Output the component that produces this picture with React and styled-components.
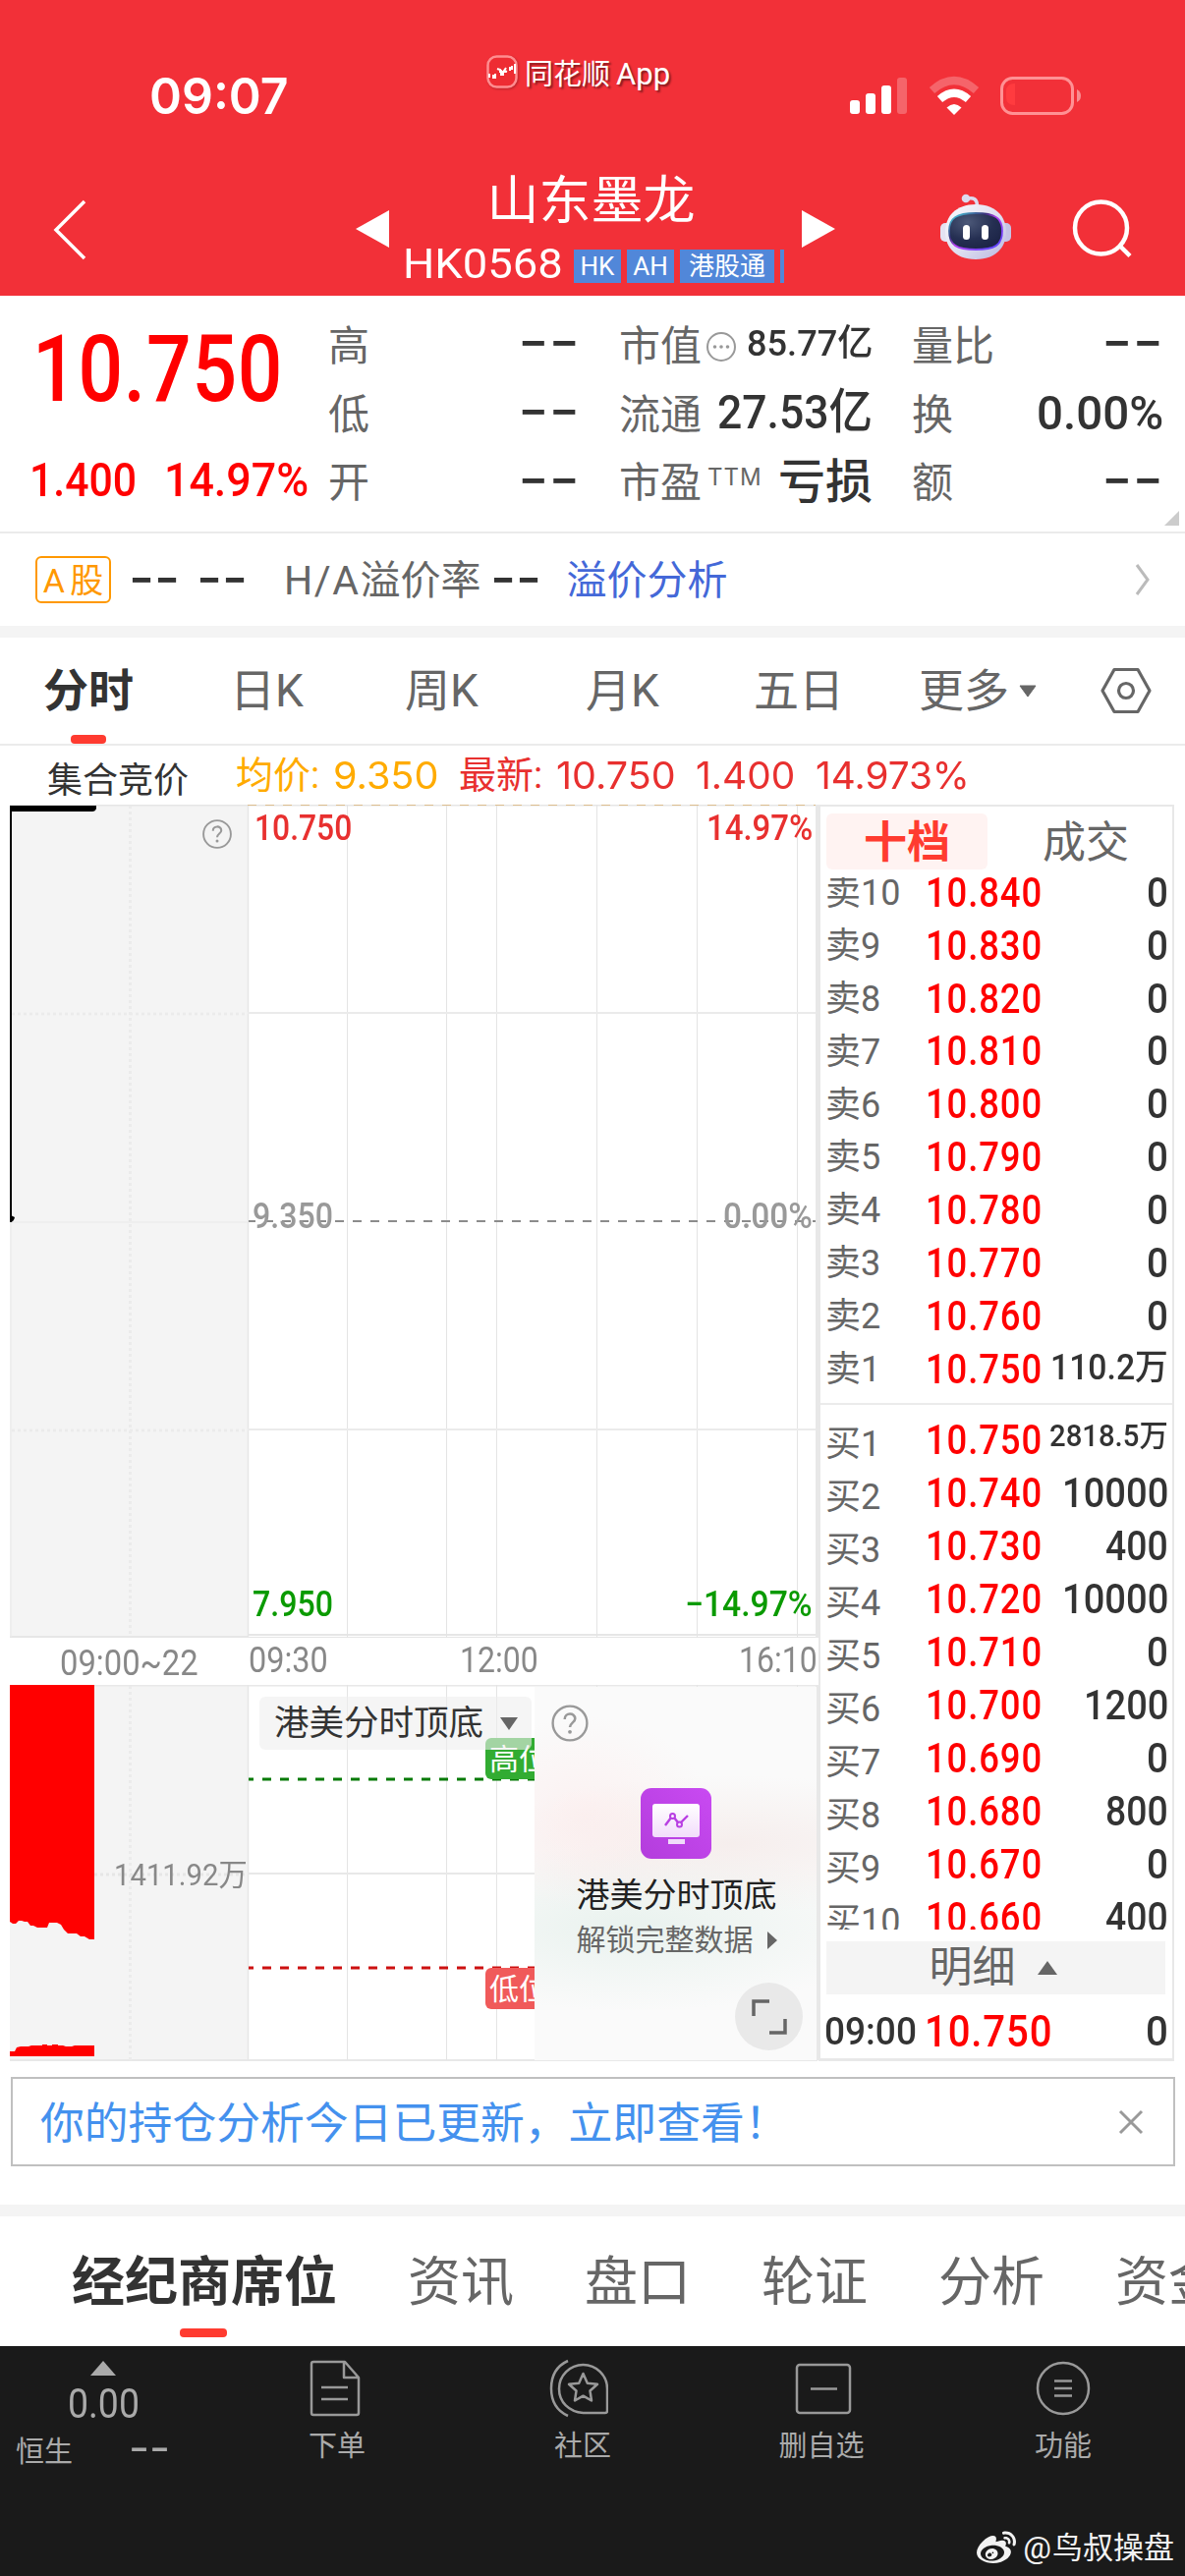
import React from "react";
import styled, { createGlobalStyle } from "styled-components";
import { FaWeibo } from "react-icons/fa";

const GlobalStyle = createGlobalStyle`
  * {
    box-sizing: border-box;
  }

  body {
    margin: 0;
    background: #ffffff;
    font-family: "Roboto", "Noto Sans CJK SC", sans-serif;
  }
`;

const sellRows = [
  ["卖10", "10.840", "0"],
  ["卖9", "10.830", "0"],
  ["卖8", "10.820", "0"],
  ["卖7", "10.810", "0"],
  ["卖6", "10.800", "0"],
  ["卖5", "10.790", "0"],
  ["卖4", "10.780", "0"],
  ["卖3", "10.770", "0"],
  ["卖2", "10.760", "0"],
  ["卖1", "10.750", "110.2万"],
];

const buyRows = [
  ["买1", "10.750", "2818.5万"],
  ["买2", "10.740", "10000"],
  ["买3", "10.730", "400"],
  ["买4", "10.720", "10000"],
  ["买5", "10.710", "0"],
  ["买6", "10.700", "1200"],
  ["买7", "10.690", "0"],
  ["买8", "10.680", "800"],
  ["买9", "10.670", "0"],
  ["买10", "10.660", "400"],
];

const NumBox = styled.span`
  display: inline-block;
  flex-shrink: 0;
  height: 1.2em;
  line-height: 1.2em;
  font-size: ${({ $size }) => $size}px;
  font-weight: ${({ $weight }) => $weight || 500};
  font-family: ${({ $font }) => $font || "Roboto"}, "Noto Sans CJK SC", sans-serif;
  color: ${({ $color }) => $color || "inherit"};
  letter-spacing: ${({ $gap }) => $gap || 0}px;
  margin-top: ${({ $drop }) => $drop || 0}px;
  margin-left: ${({ $ml }) => $ml || 0}px;
  margin-right: ${({ $mr }) => $mr || 0}px;
  white-space: nowrap;
`;

const NumInner = styled.span`
  display: inline-block;
  transform-origin: 0 50%;
`;

// Condenses the digits so that they fill exactly the given width
const Num = ({ w, children, ...rest }) => {
  const inner = React.useRef(null);
  const [k, setK] = React.useState(1);

  React.useLayoutEffect(() => {
    setK(w / inner.current.offsetWidth);
  }, [w, children]);

  return (
    <NumBox style={{ width: w }} {...rest}>
      <NumInner ref={inner} style={{ transform: `scaleX(${k})` }}>
        {children}
      </NumInner>
    </NumBox>
  );
};

const Dashes = ({ w = 63, size = 52, color = "#333333", drop = -9, ml = 0, mr = 0 }) => (
  <Num w={w} $size={size} $font="Inter" $weight={500} $color={color} $drop={drop} $ml={ml} $mr={mr}>
    --
  </Num>
);

const Page = styled.div`
  width: 1206px;
  height: 2622px;
  display: flex;
  flex-direction: column;
  overflow: hidden;
  background: #ffffff;
  color: #666666;
`;

/* ---------- header ---------- */

const Header = styled.header`
  height: 301px;
  background: #f23038;
  color: #ffffff;
`;

const StatusBar = styled.div`
  height: 150px;
  display: flex;
  align-items: flex-start;
`;

const Clock = styled.div`
  width: 338px;
  margin-left: 152px;
  padding-top: 67px;
`;

const AppMark = styled.div`
  width: 371px;
  padding: 56px 0 0 5px;
  display: flex;
  gap: 6px;
  font-size: 29px;
  line-height: 40px;
  text-shadow: 2px 2px 2px rgba(0, 0, 0, 0.45);

  svg {
    filter: drop-shadow(1px 1px 1px rgba(0, 0, 0, 0.25));
  }
`;

const AppName = styled.span`
  display: flex;
`;

const AppLatin = styled.span`
  margin-left: 6px;
  font-size: 31px;
`;

const StatusIcons = styled.div`
  padding-top: 76px;
  margin-left: 3px;
`;

const TitleBar = styled.div`
  height: 151px;
  display: flex;
`;

const BackSlot = styled.div`
  width: 360px;
  padding: 52px 0 0 52px;
`;

const ArrowSlot = styled.div`
  width: 38px;
  padding-top: 63px;
`;

const TitleBlock = styled.div`
  width: 416px;
  display: flex;
  flex-direction: column;
  align-items: center;
`;

const StockName = styled.h1`
  margin: 23px 0 0;
  padding-right: 9px;
  font-size: 53px;
  line-height: 64px;
  font-weight: 400;
`;

const CodeRow = styled.div`
  width: 392px;
  margin-top: 7px;
  display: flex;
  align-items: center;
  gap: 6px;
  height: 50px;
`;

const Tag = styled.span`
  width: ${({ $w }) => $w}px;
  height: 34px;
  margin-top: 3px;
  background: #5187d9;
  font-size: 26px;
  line-height: 35px;
  text-align: center;
  white-space: nowrap;
  flex-shrink: 0;
`;

const HeaderTools = styled.div`
  display: flex;
  margin-left: 105px;
  gap: 56px;
  padding-top: 47px;
`;

/* ---------- quote ---------- */

const Quote = styled.section`
  position: relative;
  height: 242px;
  border-bottom: 2px solid #ebebeb;
  display: flex;
`;

const PriceBlock = styled.div`
  width: 334px;
  display: flex;
  flex-direction: column;
  color: #ff0000;
`;

const BigPrice = styled.div`
  height: 138px;
  padding: 18px 0 0 33px;
`;

const ChangeRow = styled.div`
  display: flex;
  gap: 28px;
  padding: 21px 0 0 30px;
`;

const Cells = styled.div`
  display: grid;
  padding-top: 16px;
  grid-template-columns: 256px 258px 256px;
  grid-template-rows: repeat(3, 69.7px);
  column-gap: 40px;
`;

const Cell = styled.div`
  display: flex;
  align-items: center;
  justify-content: space-between;
  font-size: 42px;
  line-height: 50px;
  white-space: nowrap;
  color: #333333;
`;

const CellLabel = styled.span`
  display: flex;
  align-items: center;
  padding-top: 2px;
  color: #666666;
`;

const Sup = styled.span`
  font-family: "Inter", sans-serif;
  font-size: 24px;
  margin: -13px 0 0 6px;
  letter-spacing: 1px;
  line-height: 30px;
`;

const Loss = styled.span`
  font-size: 48px;
  font-weight: 500;
`;

const Corner = styled.i`
  position: absolute;
  right: 6px;
  bottom: 6px;
  border-left: 15px solid transparent;
  border-bottom: 15px solid #cccccc;
`;

const ShareRow = styled.section`
  height: 106px;
  padding: 0 34px 0 36px;
  border-bottom: 12px solid #f4f4f4;
  display: flex;
  align-items: center;
  font-size: 41px;
  white-space: nowrap;
`;

const ABadge = styled.span`
  width: 77px;
  height: 48px;
  border: 2px solid #ff9800;
  border-radius: 6px;
  color: #ff9800;
  font-size: 34px;
  line-height: 46px;
  text-align: center;
  word-spacing: -3px;
  margin-right: 18px;
  margin-top: -1px;
`;

const Premium = styled.span`
  margin-left: 37px;
  margin-top: -6px;
`;

const Spaced = styled.span`
  letter-spacing: 1.5px;
`;

const Link = styled.a`
  margin-left: 25px;
  margin-top: -6px;
  margin-right: auto;
  color: #4468d8;
`;

/* ---------- chart tabs ---------- */

const ChartTabs = styled.nav`
  height: 110px;
  border-bottom: 2px solid #ebebeb;
  display: flex;
  font-size: 46px;
  line-height: 110px;
  white-space: nowrap;
`;

const ChartTab = styled.div`
  position: relative;
  width: ${({ $w }) => $w}px;
  padding-left: ${({ $pad }) => $pad || 0}px;
  display: flex;
  align-items: center;
  color: ${({ $active }) => ($active ? "#333333" : "#666666")};
  font-weight: ${({ $active }) => ($active ? 700 : 400)};
`;

const Underline = styled.i`
  position: absolute;
  left: ${({ $x }) => $x}px;
  bottom: ${({ $b }) => $b || 0}px;
  width: ${({ $w }) => $w}px;
  height: 9px;
  border-radius: 4px;
  background: #ff3b30;
`;

const InfoRow = styled.div`
  height: 60px;
  display: flex;
  align-items: center;
  white-space: nowrap;
  color: #e8302f;
`;

const Auction = styled.span`
  width: 192px;
  margin-left: 48px;
  padding-top: 3px;
  font-size: 36px;
  color: #333333;
`;

const InfoItem = styled.span`
  width: ${({ $w }) => $w}px;
  display: flex;
  align-items: center;
  color: ${({ $color }) => $color || "inherit"};
`;

const InfoLabel = styled.span`
  width: 99px;
  font-size: 38px;
  line-height: 46px;
`;

/* ---------- chart ---------- */

const Market = styled.section`
  display: flex;
  height: 1279px;
  padding-left: 10px;
`;

const Charts = styled.div`
  width: 823px;
`;

const Plot = styled.div`
  position: relative;
  height: ${({ $h }) => $h}px;

  & > svg {
    display: block;
  }
`;

const PlotLabel = styled.div`
  position: absolute;
  left: ${({ $x }) => $x}px;
  top: ${({ $y }) => $y}px;
  line-height: 1;
  color: ${({ $color }) => $color};
`;

const TimeAxis = styled.div`
  height: 48px;
  display: flex;
  color: #888888;
`;

const TimeSlot = styled.div`
  width: ${({ $w }) => $w}px;
  padding-left: ${({ $pad }) => $pad || 0}px;
  padding-top: ${({ $top }) => $top}px;
`;

const LevelTag = styled.div`
  position: absolute;
  left: 484px;
  top: ${({ $y }) => $y}px;
  width: 50px;
  height: 42px;
  padding-left: 4px;
  overflow: hidden;
  border-radius: 6px 0 0 6px;
  background: ${({ $color }) => $color};
  color: #ffffff;
  font-size: 30px;
  line-height: 44px;
  white-space: nowrap;
`;

const Indicator = styled.div`
  position: absolute;
  left: 254px;
  top: 12px;
  width: 277px;
  height: 54px;
  padding: 0 14px 0 15px;
  border-radius: 6px;
  background: rgba(238, 238, 238, 0.6);
  display: flex;
  align-items: center;
  justify-content: space-between;
  font-size: 35.5px;
  line-height: 58px;
  color: #333333;
`;

const Unlock = styled.div`
  position: absolute;
  left: 534px;
  top: 2px;
  width: 287px;
  height: 380px;
  padding-top: 103px;
  display: flex;
  flex-direction: column;
  align-items: center;
  background:
    radial-gradient(ellipse 130px 100px at 50px 130px, rgba(255, 228, 228, 0.4), transparent),
    radial-gradient(ellipse 260px 70px at 200px 160px, rgba(243, 230, 228, 0.6), transparent),
    radial-gradient(ellipse 260px 85px at 100px 245px, rgba(224, 238, 232, 0.65), transparent),
    #fafafa;
`;

const UnlockTitle = styled.div`
  margin-top: 11px;
  margin-left: 2px;
  font-size: 34px;
  line-height: 52px;
  color: #222222;
`;

const UnlockSub = styled.div`
  display: flex;
  align-items: center;
  gap: 14px;
  margin-left: 2px;
  font-size: 30px;
  line-height: 40px;
  color: #666666;
`;

const Expand = styled.div`
  position: absolute;
  left: 738px;
  top: 303px;
  width: 69px;
  height: 69px;
  border-radius: 50%;
  background: #e9e9e9;
  display: flex;
  align-items: center;
  justify-content: center;
`;

const HelpSlot = styled.div`
  position: absolute;
  left: ${({ $x }) => $x}px;
  top: ${({ $y }) => $y}px;

  svg {
    display: block;
  }
`;

/* ---------- order book ---------- */

const Book = styled.div`
  width: 362px;
  border: 2px solid #e8e8e8;
  border-bottom-width: 3px;
`;

const BookTabs = styled.div`
  height: 72px;
  padding: 7px 0 0 6px;
  display: flex;
  font-size: 44px;
  line-height: 61px;
  text-align: center;
`;

const BookTab = styled.div`
  width: ${({ $active }) => ($active ? 164 : 200)}px;
  height: 57px;
  flex-shrink: 0;
  border-radius: 6px;
  background: ${({ $active }) => ($active ? "#fff3f2" : "none")};
  color: ${({ $active }) => ($active ? "#ff3b30" : "#666666")};
  font-weight: ${({ $active }) => ($active ? 700 : 400)};
`;

const Rows = styled.div`
  height: ${({ $h }) => $h}px;
  overflow: hidden;
`;

const OrderRows = styled.div`
  margin-top: ${({ $y }) => $y}px;
  display: flex;
  flex-direction: column;
`;

const Order = styled.div`
  height: ${({ $h }) => $h}px;
  padding: 0 4px 0 5px;
  display: flex;
  align-items: center;
  color: #333333;
`;

const OrderLabel = styled.span`
  width: 101px;
  padding-top: ${({ $top }) => $top || 0}px;
  font-size: 36px;
  line-height: 44px;
  color: #666666;
`;

const Qty = styled.span`
  margin-left: auto;
  display: flex;
`;

const BookLine = styled.div`
  height: 2px;
  background: #ebebeb;
`;

const DetailBar = styled.div`
  width: 345px;
  height: 54px;
  margin: 12px 0 0 6px;
  padding-right: 6px;
  background: #f4f4f4;
  display: flex;
  align-items: center;
  justify-content: center;
  gap: 22px;
  font-size: 44px;
  line-height: 58px;
`;

const TradeRow = styled.div`
  height: 65px;
  padding: 11px 4px 0 4px;
  display: flex;
  align-items: center;
  color: #333333;
`;

/* ---------- notice and bottom tabs ---------- */

const Notice = styled.div`
  width: 1185px;
  height: 91px;
  margin: 16px 0 0 11px;
  padding: 0 30px 0 28px;
  border: 2px solid #c0c0c0;
  display: flex;
  align-items: center;
  justify-content: space-between;
  color: #4491ee;
  font-size: 44.8px;
  white-space: nowrap;
`;

const NoticeText = styled.span`
  margin-top: -5px;
`;

const NewsTabs = styled.nav`
  position: relative;
  height: 144px;
  margin-top: 39px;
  border-top: 12px solid #f4f4f4;
  display: flex;
  gap: 72px;
  padding-left: 73px;
  font-size: 54px;
  line-height: 136px;
  white-space: nowrap;
`;

const NewsTab = styled.span`
  color: ${({ $active }) => ($active ? "#333333" : "#666666")};
  font-weight: ${({ $active }) => ($active ? 700 : 400)};
`;

const BottomBar = styled.footer`
  position: relative;
  flex: 1;
  background: #1a1a1a;
  color: #aaaaaa;
  display: flex;
  font-size: 29px;
  line-height: 40px;
`;

const IndexItem = styled.div`
  width: 212px;
  padding-top: 15px;
`;

const IndexTop = styled.div`
  width: 210px;
  height: 73px;
  display: flex;
  flex-direction: column;
  align-items: center;

  svg {
    flex-shrink: 0;
  }
`;

const IndexRow = styled.div`
  display: flex;
  align-items: center;
  gap: 57px;
  padding-left: 16px;
`;

const NavItem = styled.div`
  width: ${({ $w }) => $w}px;
  padding-top: 13px;
  display: flex;
  flex-direction: column;
  align-items: center;
  white-space: nowrap;

  svg {
    margin-left: ${({ $nudge }) => $nudge || 0}px;
  }
`;

const NavLabel = styled.span`
  margin-top: 9px;
`;

const Watermark = styled.div`
  position: absolute;
  right: 11px;
  bottom: 6px;
  display: flex;
  align-items: center;
  gap: 7px;
  color: #f2f2f2;
  font-size: 31px;
  line-height: 44px;
`;

const At = styled.span`
  font-size: 32px;
  margin-right: 1px;
`;

/* ---------- drawings ---------- */

const AppLogo = () => (
  <svg width="33" height="34" viewBox="0 0 33 34">
    <rect x="1.5" y="1.5" width="29" height="31" rx="9" fill="#ee2c33" stroke="#ff8d90" strokeWidth="2.5" />
    <path d="M3 19v4M7 20v3h2v-4M11 14l3 1v3M15 15v5h2v-4M20 13l-2 3 3 1M24 12v4M26 11v4M29 9v10" stroke="#fff" strokeWidth="2" fill="none" />
  </svg>
);

const StatusGlyphs = () => (
  <svg width="240" height="44" viewBox="0 0 240 44">
    <g fill="#fff">
      <rect x="1" y="26" width="10" height="14" rx="3" />
      <rect x="17" y="19" width="10" height="21" rx="3" />
      <rect x="33" y="11" width="10" height="29" rx="3" />
      <rect x="49" y="3" width="10" height="37" rx="3" opacity=".25" />
      <path d="M107 41l-7.500-7.500q7.500-7 15 0z" />
    </g>
    <path d="M84.500 16Q107 -4 129.500 16" stroke="#fff" strokeWidth="8" fill="none" opacity=".25" />
    <path d="M92.500 25Q107 12.500 121.500 25" stroke="#fff" strokeWidth="8" fill="none" />
    <rect x="155.500" y="3.500" width="72" height="36" rx="11" fill="none" stroke="#ff9194" strokeWidth="3" />
    <path d="M160 17q0-8 9-8v22q-9 0-9-8z" fill="#ff3b3f" />
    <path d="M232 15q4 2 4 6.500t-4 6.500z" fill="#fff" opacity=".45" />
  </svg>
);

const BackIcon = () => (
  <svg width="40" height="64" viewBox="0 0 40 64">
    <path d="M34 3L5 32l29 29" fill="none" stroke="#fff" strokeWidth="3.500" />
  </svg>
);

const Arrow = ({ flip }) => (
  <svg width="38" height="40" viewBox="0 0 38 40">
    <path d={flip ? "M2 1v38l34-19z" : "M36 1v38L2 20z"} fill="#fff" />
  </svg>
);

const Robot = () => (
  <svg width="72" height="70" viewBox="0 0 72 70">
    <defs>
      <linearGradient id="shell" x1="0" y1="0" x2="1" y2="1">
        <stop offset="0" stopColor="#fbfafc" />
        <stop offset="0.55" stopColor="#dedef0" />
        <stop offset="1" stopColor="#b9b6df" />
      </linearGradient>
      <linearGradient id="rim" x1="0" y1="0" x2="1" y2="1">
        <stop offset="0" stopColor="#49e2ea" />
        <stop offset="0.35" stopColor="#39307a" />
        <stop offset="0.5" stopColor="#b63df0" />
        <stop offset="1" stopColor="#4a48ff" />
      </linearGradient>
      <radialGradient id="face" cx="0.35" cy="0.25" r="0.8">
        <stop offset="0" stopColor="#4c5878" />
        <stop offset="0.6" stopColor="#252f52" />
        <stop offset="1" stopColor="#1b2346" />
      </radialGradient>
    </defs>
    <path d="M28 5q9-2 9.500 7" fill="none" stroke="#dcdaee" strokeWidth="3.500" />
    <circle cx="26" cy="5" r="4.300" fill="#dcdaee" />
    <rect x="0" y="30" width="12" height="19" rx="5" fill="#e4e2f2" />
    <rect x="60" y="30" width="12" height="19" rx="5" fill="#c5c3e6" />
    <path d="M36 11c20 0 31 12 31 28 0 17-12 28-31 28S5 56 5 39c0-16 11-28 31-28z" fill="url(#shell)" />
    <path d="M36 20c20 0 27 5 27 18 0 15-8 19-27 19S9 53 9 38c0-13 7-18 27-18z" fill="url(#face)" stroke="url(#rim)" strokeWidth="1.800" />
    <rect x="23" y="32" width="7" height="15" rx="3.500" fill="#fff" />
    <rect x="42" y="32" width="7" height="15" rx="3.500" fill="#fff" />
  </svg>
);

const SearchIcon = () => (
  <svg width="72" height="72" viewBox="0 0 72 72">
    <circle cx="35.500" cy="35" r="26.500" fill="none" stroke="#fff" strokeWidth="4.500" />
    <path d="M54.500 53L65 63.500" stroke="#fff" strokeWidth="4.500" />
  </svg>
);

const DotsSvg = styled.svg`
  margin-left: 4px;
`;

const MoreDots = () => (
  <DotsSvg width="32" height="32" viewBox="0 0 32 32">
    <circle cx="16" cy="16" r="14" fill="none" stroke="#999" strokeWidth="2" />
    <circle cx="9.500" cy="16" r="1.800" fill="#999" />
    <circle cx="16" cy="16" r="1.800" fill="#999" />
    <circle cx="22.500" cy="16" r="1.800" fill="#999" />
  </DotsSvg>
);

const Help = ({ r }) => (
  <svg width={r * 2 + 4} height={r * 2 + 4} viewBox="0 0 34 34">
    <circle cx="17" cy="17" r="14.800" fill="none" stroke="#999" strokeWidth="2" />
    <path d="M12.500 13.500c0-6 9-6 9-.5 0 3.500-4.500 3.500-4.500 7.500" fill="none" stroke="#999" strokeWidth="2.200" />
    <circle cx="17" cy="24.500" r="1.600" fill="#999" />
  </svg>
);

const Hexagon = () => (
  <svg width="54" height="50" viewBox="0 0 54 50">
    <path d="M15 3.500h24L51 25 39 46.500H15L3 25z" fill="none" stroke="#666" strokeWidth="3.200" strokeLinejoin="round" />
    <circle cx="27" cy="25" r="7.500" fill="none" stroke="#666" strokeWidth="3.200" />
  </svg>
);

const DownSvg = styled.svg`
  margin-left: 10px;
`;

const Triangle = ({ w, h, d, color = "#666666" }) => (
  <svg width={w} height={h} viewBox={`0 0 ${w} ${h}`}>
    {d === "up" && <path d={`M0 ${h}h${w}L${w / 2} 0z`} fill={color} />}
    {d === "down" && <path d={`M0 0h${w}L${w / 2} ${h}z`} fill={color} />}
    {d === "right" && <path d={`M0 0v${h}L${w} ${h / 2}z`} fill={color} />}
  </svg>
);

const gridX = [344, 445, 496, 598, 700, 802];

const PriceGrid = () => (
  <svg width="823" height="848" viewBox="0 0 823 848">
    <rect width="242" height="848" fill="#f4f4f4" />
    <path d="M0 .5h822M0 847h242M242 845h581" stroke="#e6e6e6" strokeWidth="2" />
    <path d="M242 848h581" stroke="#e6e6e6" strokeWidth="2" />
    <path d="M122.500 1v846" stroke="#ebebeb" strokeWidth="3" strokeDasharray="3 3" />
    <path d="M2 213h240M2 637h240" stroke="#ebebeb" strokeWidth="3" strokeDasharray="3 3" />
    <path d="M0 425h242M1 425v422" stroke="#ebebeb" strokeWidth="1.500" />
    <path d="M242.500 0v848" stroke="#e6e6e6" strokeWidth="1.500" />
    {gridX.map((x) => (
      <path key={x} d={`M${x - 1}.500 0v848`} stroke="#e4e4e4" strokeWidth="1" />
    ))}
    <path d="M242 212h580M242 636h580" stroke="#ebebeb" strokeWidth="2" />
    <path d="M243 424h580" stroke="#8c8c8c" strokeWidth="1.800" strokeDasharray="9 9" strokeDashoffset="2" />
    <path d="M242 .5h580" stroke="#dcbd8e" strokeWidth="1.200" strokeDasharray="9 9" />
    <path d="M821.500 0v848" stroke="#e8e8e8" strokeWidth="3" />
    <path d="M0 1h88v3q-1 3-4 3H2v418H0z" fill="#000" />
    <path d="M1 418l4 2q-1 5-5 5z" fill="#000" />
  </svg>
);

const VolumeGrid = () => (
  <svg width="823" height="383" viewBox="0 0 823 383">
    <rect width="242" height="383" fill="#f4f4f4" />
    <path d="M0 .5h822M0 382h822" stroke="#e8e8e8" strokeWidth="2" />
    <path d="M122.500 1v381" stroke="#ebebeb" strokeWidth="3" strokeDasharray="3 3" />
    <path d="M86 193h156" stroke="#e6e6e6" strokeWidth="3" strokeDasharray="3 3" />
    <path d="M242.500 0v382" stroke="#e6e6e6" strokeWidth="1.500" />
    {gridX.map((x) => (
      <path key={x} d={`M${x - 1}.500 0v382`} stroke="#e4e4e4" strokeWidth="1" />
    ))}
    <path d="M242 192h292" stroke="#e8e8e8" strokeWidth="2" />
    <path d="M243 96h291" stroke="#077a07" strokeWidth="3" strokeDasharray="9 9" strokeDashoffset="4" />
    <path d="M243 288h291" stroke="#cc1111" strokeWidth="3" strokeDasharray="9 9" strokeDashoffset="4" />
    <path d="M821.500 0v382" stroke="#e8e8e8" strokeWidth="3" />
    <path
      d="M0 0h86v259h-5l-5-3h-4l-4-3h-9l-4-4-3-5-4-2h-8l-2 5H28l-4-2h-3l-3-4h-3l-3-1H9l-3 3H3l-3-2z"
      fill="#f00"
    />
    <path d="M0 373h5l2-4 4-1h8l3-1h11v-1h5v1h5v-1h6v1h5l3 1h6l3-1h20v11H0z" fill="#f00" />
  </svg>
);

const Monitor = () => (
  <svg width="72" height="72" viewBox="0 0 72 72">
    <defs>
      <linearGradient id="violet" x1="0" y1="1" x2="1" y2="0">
        <stop offset="0" stopColor="#b33ddc" />
        <stop offset="1" stopColor="#c94af2" />
      </linearGradient>
      <linearGradient id="screen" x1="0" y1="0" x2="0" y2="1">
        <stop offset="0" stopColor="#fff" />
        <stop offset="1" stopColor="#f2dcfb" />
      </linearGradient>
    </defs>
    <rect width="72" height="72" rx="11" fill="url(#violet)" />
    <rect x="12" y="16" width="48" height="34" rx="3" fill="url(#screen)" />
    <rect x="28" y="52" width="17" height="5" fill="#f0dcfa" />
    <path d="M25 38l6-8M34 30l4 5M41 35l7-7" stroke="#b83fe3" strokeWidth="2.400" fill="none" />
    <circle cx="32.500" cy="28.500" r="2.500" fill="none" stroke="#b83fe3" strokeWidth="2" />
    <circle cx="39.500" cy="37" r="2.500" fill="none" stroke="#b83fe3" strokeWidth="2" />
  </svg>
);

const ExpandIcon = () => (
  <svg width="36" height="36" viewBox="0 0 36 36">
    <path d="M2 17V2h16M34 20v14H18" fill="none" stroke="#666" strokeWidth="3.500" />
  </svg>
);

const OrderIcon = () => (
  <svg width="60" height="60" viewBox="0 0 60 60">
    <g fill="none" stroke="#999" strokeWidth="2.500" strokeLinejoin="round">
      <path d="M41 3H9q-2 0-2 2v50q0 2 2 2h44q2 0 2-2V19zM40 3v16h15" />
      <path d="M17 29h27M17 41h27" />
    </g>
  </svg>
);

const CommunityIcon = () => (
  <svg width="60" height="60" viewBox="0 0 60 60">
    <g fill="none" stroke="#999" strokeWidth="2.500" strokeLinejoin="round">
      <path d="M19 2C8 7 2 17 2 30s6 23 17 28" />
      <path d="M34.500 55C20 54 10 44 10 30.500S21 6 34.500 6 59 17 59 30.500V53q0 2-2 2z" />
      <path d="M34.500 15l4.300 9.700 10.200 1.100-7.500 6.700 1.500 10-8.500-4.800-8.500 4.800 1.500-10-7.500-6.700 10.200-1.100z" />
    </g>
  </svg>
);

const RemoveIcon = () => (
  <svg width="60" height="60" viewBox="0 0 60 60">
    <rect x="3" y="6" width="54" height="49" rx="3" fill="none" stroke="#999" strokeWidth="2.500" />
    <path d="M17 30.500h27" stroke="#999" strokeWidth="2.500" />
  </svg>
);

const MenuIcon = () => (
  <svg width="60" height="60" viewBox="0 0 60 60">
    <circle cx="30" cy="30" r="26" fill="none" stroke="#999" strokeWidth="2.500" />
    <path d="M21 22.500h18M21 30h18M21 37.500h18" stroke="#999" strokeWidth="2.500" />
  </svg>
);

/* ---------- parts ---------- */

const qtySize = (qty) => {
  if (qty === "110.2万") return { w: 120, $size: 36, $drop: -3 };
  if (qty === "2818.5万") return { w: 121, $size: 31, $drop: -8 };
  return { w: qty.length * 22 - (qty.length > 1 ? 2 : 0), $size: 42 };
};

const OrderList = ({ rows, height, top, labelTop }) => (
  <OrderRows $y={top}>
    {rows.map(([label, price, qty]) => (
      <Order key={label} $h={height}>
        <OrderLabel $top={labelTop}>{label}</OrderLabel>
        <Num w={119} $size={42} $color="#ff0000" $gap={1} $ml={1}>
          {price}
        </Num>
        <Qty>
          <Num {...qtySize(qty)}>{qty}</Num>
        </Qty>
      </Order>
    ))}
  </OrderRows>
);

const App = () => {
  return (
    <Page>
      <GlobalStyle />
      <Header>
        <StatusBar>
          <Clock>
            <Num w={142} $size={51} $font="Inter" $weight={600}>
              09:07
            </Num>
          </Clock>
          <AppMark>
            <AppLogo />
            <AppName>
              同花顺<AppLatin>App</AppLatin>
            </AppName>
          </AppMark>
          <StatusIcons>
            <StatusGlyphs />
          </StatusIcons>
        </StatusBar>
        <TitleBar>
          <BackSlot>
            <BackIcon />
          </BackSlot>
          <ArrowSlot>
            <Arrow />
          </ArrowSlot>
          <TitleBlock>
            <StockName>山东墨龙</StockName>
            <CodeRow>
              <Num w={163} $size={42} $weight={400} $mr={5}>
                HK0568
              </Num>
              <Tag $w={48}>HK</Tag>
              <Tag $w={48}>AH</Tag>
              <Tag $w={96}>港股通</Tag>
              <Tag $w={4} />
            </CodeRow>
          </TitleBlock>
          <ArrowSlot>
            <Arrow flip />
          </ArrowSlot>
          <HeaderTools>
            <Robot />
            <SearchIcon />
          </HeaderTools>
        </TitleBar>
      </Header>

      <Quote>
        <PriceBlock>
          <BigPrice>
            <Num w={255} $size={95} $gap={1}>
              10.750
            </Num>
          </BigPrice>
          <ChangeRow>
            <Num w={109} $size={49}>
              1.400
            </Num>
            <Num w={147} $size={49}>
              14.97%
            </Num>
          </ChangeRow>
        </PriceBlock>
        <Cells>
          <Cell>
            <CellLabel>高</CellLabel>
            <Dashes />
          </Cell>
          <Cell>
            <CellLabel>
              市值
              <MoreDots />
            </CellLabel>
            <Num w={128} $size={37} $drop={-3}>
              85.77亿
            </Num>
          </Cell>
          <Cell>
            <CellLabel>量比</CellLabel>
            <Dashes />
          </Cell>
          <Cell>
            <CellLabel>低</CellLabel>
            <Dashes />
          </Cell>
          <Cell>
            <CellLabel>流通</CellLabel>
            <Num w={158} $size={49} $drop={-2}>
              27.53亿
            </Num>
          </Cell>
          <Cell>
            <CellLabel>换</CellLabel>
            <Num w={129} $size={49}>
              0.00%
            </Num>
          </Cell>
          <Cell>
            <CellLabel>开</CellLabel>
            <Dashes />
          </Cell>
          <Cell>
            <CellLabel>
              市盈
              <Sup>TTM</Sup>
            </CellLabel>
            <Loss>亏损</Loss>
          </Cell>
          <Cell>
            <CellLabel>额</CellLabel>
            <Dashes />
          </Cell>
        </Cells>
        <Corner />
      </Quote>

      <ShareRow>
        <ABadge>A 股</ABadge>
        <Dashes w={52} drop={-4} />
        <Dashes w={52} drop={-4} ml={17} />
        <Premium>
          <Spaced>H/A</Spaced>溢价率
        </Premium>
        <Dashes w={52} drop={-4} ml={10} />
        <Link>溢价分析</Link>
        <svg width="18" height="32" viewBox="0 0 18 32">
          <path d="M3 1l11 15L3 31" fill="none" stroke="#bbb" strokeWidth="3" />
        </svg>
      </ShareRow>

      <ChartTabs>
        <ChartTab $w={234} $pad={44} $active>
          分时
          <Underline $x={72} $w={36} />
        </ChartTab>
        <ChartTab $w={178}>日K</ChartTab>
        <ChartTab $w={184}>周K</ChartTab>
        <ChartTab $w={171}>月K</ChartTab>
        <ChartTab $w={168}>五日</ChartTab>
        <ChartTab $w={184}>
          更多
          <DownSvg width="18" height="13" viewBox="0 0 18 13">
            <path d="M1 1h16L9 12z" fill="#666" stroke="#666" strokeLinejoin="round" />
          </DownSvg>
        </ChartTab>
        <ChartTab $w={60}>
          <Hexagon />
        </ChartTab>
      </ChartTabs>

      <InfoRow>
        <Auction>集合竞价</Auction>
        <InfoItem $w={227} $color="#ffab00">
          <InfoLabel>均价:</InfoLabel>
          <Num w={107} $size={38.5} $font="Inter" $weight={400}>
            9.350
          </Num>
        </InfoItem>
        <InfoItem $w={241}>
          <InfoLabel>最新:</InfoLabel>
          <Num w={122} $size={38.5} $font="Inter" $weight={400}>
            10.750
          </Num>
        </InfoItem>
        <InfoItem $w={122}>
          <Num w={101} $size={38.5} $font="Inter" $weight={400}>
            1.400
          </Num>
        </InfoItem>
        <Num w={157} $size={38.5} $font="Inter" $weight={400}>
          14.973%
        </Num>
      </InfoRow>

      <Market>
        <Charts>
          <Plot $h={848}>
            <PriceGrid />
            <HelpSlot $x={195} $y={14}>
              <Help r={14} />
            </HelpSlot>
            <PlotLabel $x={249} $y={3} $color="#e8302f">
              <Num w={99} $size={36}>
                10.750
              </Num>
            </PlotLabel>
            <PlotLabel $x={709} $y={3} $color="#e8302f">
              <Num w={108} $size={36}>
                14.97%
              </Num>
            </PlotLabel>
            <PlotLabel $x={247} $y={398} $color="#999999">
              <Num w={82} $size={36}>
                9.350
              </Num>
            </PlotLabel>
            <PlotLabel $x={726} $y={398} $color="#999999">
              <Num w={91} $size={36}>
                0.00%
              </Num>
            </PlotLabel>
            <PlotLabel $x={247} $y={793} $color="#0a9a00">
              <Num w={82} $size={36}>
                7.950
              </Num>
            </PlotLabel>
            <PlotLabel $x={687} $y={793} $color="#0a9a00">
              <Num w={130} $size={36}>
                −14.97%
              </Num>
            </PlotLabel>
          </Plot>
          <TimeAxis>
            <TimeSlot $w={242} $pad={51} $top={5}>
              <Num w={141} $size={36} $weight={400}>
                09:00~22
              </Num>
            </TimeSlot>
            <TimeSlot $w={216} $pad={1} $top={2}>
              <Num w={81} $size={36} $weight={400}>
                09:30
              </Num>
            </TimeSlot>
            <TimeSlot $w={284} $top={2}>
              <Num w={80} $size={36} $weight={400}>
                12:00
              </Num>
            </TimeSlot>
            <TimeSlot $w={80} $top={2}>
              <Num w={80} $size={36} $weight={400}>
                16:10
              </Num>
            </TimeSlot>
          </TimeAxis>
          <Plot $h={384}>
            <VolumeGrid />
            <PlotLabel $x={106} $y={175} $color="#888888">
              <Num w={136} $size={31} $weight={400}>
                1411.92万
              </Num>
            </PlotLabel>
            <LevelTag $y={54} $color="#32ac32">
              高位
            </LevelTag>
            <LevelTag $y={288} $color="#f05a5a">
              低位
            </LevelTag>
            <Indicator>
              港美分时顶底
              <Triangle w={18} h={13} d="down" />
            </Indicator>
            <Unlock>
              <Monitor />
              <UnlockTitle>港美分时顶底</UnlockTitle>
              <UnlockSub>
                解锁完整数据
                <Triangle w={10} h={18} d="right" />
              </UnlockSub>
            </Unlock>
            <HelpSlot $x={550} $y={19}>
              <Help r={18} />
            </HelpSlot>
            <Expand>
              <ExpandIcon />
            </Expand>
          </Plot>
        </Charts>

        <Book>
          <BookTabs>
            <BookTab $active>十档</BookTab>
            <BookTab>成交</BookTab>
          </BookTabs>
          <Rows $h={535}>
            <OrderList rows={sellRows} height={53.9} top={-11} />
          </Rows>
          <BookLine />
          <Rows $h={534}>
            <OrderList rows={buyRows} height={54.05} top={9} labelTop={7} />
          </Rows>
          <DetailBar>
            明细
            <Triangle w={20} h={14} d="up" />
          </DetailBar>
          <TradeRow>
            <Num w={94} $size={39}>
              09:00
            </Num>
            <Num w={130} $size={45} $color="#ff0000" $gap={1} $ml={8}>
              10.750
            </Num>
            <Qty>
              <Num w={23} $size={42}>
                0
              </Num>
            </Qty>
          </TradeRow>
        </Book>
      </Market>

      <Notice>
        <NoticeText>你的持仓分析今日已更新，立即查看！</NoticeText>
        <svg width="26" height="26" viewBox="0 0 26 26">
          <path d="M2 2l22 22M24 2L2 24" stroke="#999" strokeWidth="3" />
        </svg>
      </Notice>

      <NewsTabs>
        <NewsTab $active>经纪商席位</NewsTab>
        <NewsTab>资讯</NewsTab>
        <NewsTab>盘口</NewsTab>
        <NewsTab>轮证</NewsTab>
        <NewsTab>分析</NewsTab>
        <NewsTab>资金</NewsTab>
        <Underline $x={183} $w={48} $b={9} />
      </NewsTabs>

      <BottomBar>
        <IndexItem>
          <IndexTop>
            <Triangle w={26} h={15} d="up" color="#aaaaaa" />
            <Num w={73} $size={42} $weight={400} $drop={4}>
              0.00
            </Num>
          </IndexTop>
          <IndexRow>
            恒生
            <Dashes w={42} size={38} color="#aaaaaa" drop={-9} />
          </IndexRow>
        </IndexItem>
        <NavItem $w={262} $nudge={-6}>
          <OrderIcon />
          <NavLabel>下单</NavLabel>
        </NavItem>
        <NavItem $w={238} $nudge={-8}>
          <CommunityIcon />
          <NavLabel>社区</NavLabel>
        </NavItem>
        <NavItem $w={248} $nudge={4}>
          <RemoveIcon />
          <NavLabel>删自选</NavLabel>
        </NavItem>
        <NavItem $w={244}>
          <MenuIcon />
          <NavLabel>功能</NavLabel>
        </NavItem>
        <Watermark>
          <FaWeibo size={40} />
          <span>
            <At>@</At>鸟叔操盘
          </span>
        </Watermark>
      </BottomBar>
    </Page>
  );
};

export default App;
